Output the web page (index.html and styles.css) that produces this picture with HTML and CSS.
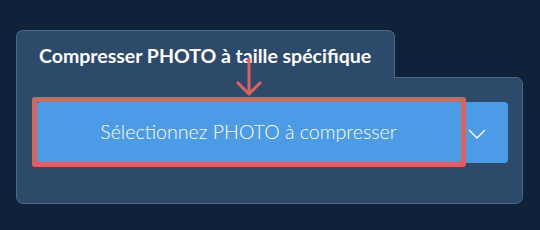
FILE: index.html
```html
<!DOCTYPE html>
<html lang="fr">
<head>
  <meta charset="UTF-8">
  <meta name="viewport" content="width=device-width, initial-scale=1.0">
  <title>Compresser PHOTO</title>
  <link rel="stylesheet" href="styles.css">
</head>
<body>

  <div class="onglet">Compresser PHOTO à taille spécifique</div>

  <div class="panneau">
    <div class="groupe">
      <button class="bouton">Sélectionnez PHOTO à compresser</button>
      <button class="menu">
        <svg width="18" height="10" viewBox="0 0 18 10">
          <path d="M1 1 L9 9 L17 1" fill="none" stroke="#fff" stroke-width="1.4"/>
        </svg>
      </button>
      <!-- annotation par-dessus le bouton -->
      <div class="cadre"></div>
      <svg class="fleche" width="30" height="40" viewBox="0 0 30 40">
        <path d="M15 1 L15 37 M3 25 L15 37 L27 25" fill="none" stroke="#dc625c" stroke-width="3"/>
      </svg>
    </div>
  </div>

</body>
</html>
```

FILE: styles.css
```css
body {
  margin: 0;
  padding: 30px 16px 0 16px;
  background-color: #10223a;
  font-family: Lato, "Open Sans", sans-serif;
  color: #fff;
}
.onglet {
  display: inline-block;
  position: relative;
  z-index: 1;
  box-sizing: border-box;
  width: 379px;
  height: 48px;
  margin-bottom: -1px;
  padding: 13px 0 0 22px;
  background-color: #2d4a6b;
  border: 1px solid #4b6687;
  border-bottom: none;
  border-radius: 7px 7px 0 0;
  font-size: 19.5px;
  font-weight: 700;
}
.panneau {
  width: 507px;
  box-sizing: border-box;
  padding: 24px 14px 40px 19px;
  background-color: #2d4a6b;
  border: 1px solid #4b6687;
  border-radius: 0 7px 7px 7px;
}
.groupe {
  display: flex;
  position: relative;
  height: 61px;
}
.bouton {
  flex: 1;
  border: none;
  background-color: #4c9be6;
  color: #fff;
  font-family: Lato, "Open Sans", sans-serif;
  font-weight: 300;
  font-size: 19.6px;
  border-radius: 4px 0 0 4px;
  padding: 0 0 2px 0;
}
.menu {
  width: 47px;
  border: none;
  background-color: #4c9be6;
  border-radius: 0 4px 4px 0;
  display: flex;
  align-items: center;
  padding: 2px 0 0 7px;
}
.cadre {
  position: absolute;
  left: -4px;
  top: -5px;
  width: 434px;
  height: 70px;
  box-sizing: border-box;
  border: 5px solid #dc625c;
  border-radius: 3px;
}
.fleche {
  position: absolute;
  z-index: 2;
  left: 198px;
  top: -45px;
}
```
